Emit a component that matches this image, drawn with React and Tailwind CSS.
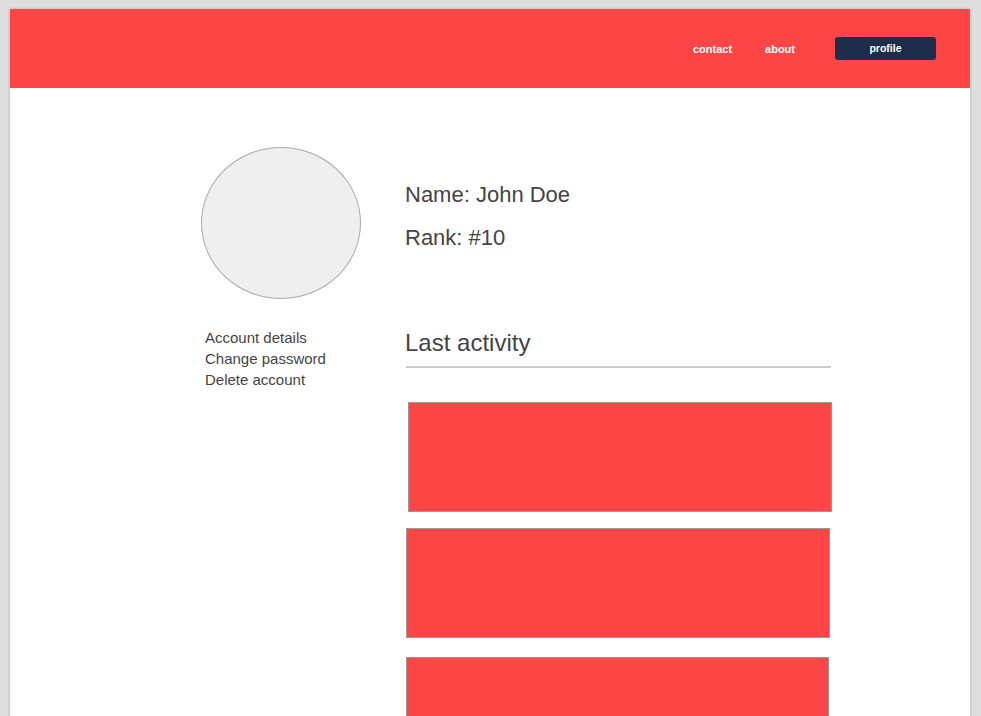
export default function App() {
  return (
    <div className="h-[716px] overflow-hidden bg-[#dedede] pt-[9px] pl-[10px] font-['Liberation_Sans',Arial,sans-serif]">
      <div className="w-[960px] h-[800px] bg-white shadow-[0_0_3px_rgba(0,0,0,0.25)]">
        <header className="h-[79px] bg-[#ff4646] flex items-center justify-end pr-[34px]">
          <nav className="flex items-center text-white text-[11px] font-bold">
            <a className="mr-[33px] mt-[1px]">contact</a>
            <a className="mr-[40px] mt-[1px]">about</a>
            <button className="w-[101px] h-[23px] bg-[#1f2d4d] rounded-[3px] text-[10.5px] font-bold text-white">
              profile
            </button>
          </nav>
        </header>

        <main className="flex pl-[191px] pt-[59px]">
          <aside className="w-[204px] shrink-0">
            <div className="w-[160px] h-[152px] rounded-[50%] bg-[#efefef] border border-[#a9a9a9]"></div>
            <ul className="mt-[28px] pl-[4px] text-[15px] leading-[21px] text-[#444]">
              <li>Account details</li>
              <li>Change password</li>
              <li>Delete account</li>
            </ul>
          </aside>

          <section className="w-[427px]">
            <div className="pt-[35px] text-[22px] text-[#444] leading-[26px]">
              <p>Name: John Doe</p>
              <p className="mt-[17px]">Rank: #10</p>
            </div>
            <h2 className="mt-[78px] text-[24px] text-[#444] leading-[28px]">Last activity</h2>
            <div className="mt-[9px] ml-[1px] w-[425px] h-[2px] bg-[#cccccc]"></div>
            <div className="mt-[34px] flex flex-col">
              <div className="ml-[3px] w-[424px] h-[110px] bg-[#ff4646] border border-[#999]"></div>
              <div className="mt-[16px] ml-[1px] w-[424px] h-[110px] bg-[#ff4646] border border-[#999]"></div>
              <div className="mt-[19px] ml-[1px] w-[423px] h-[110px] bg-[#ff4646] border border-[#999]"></div>
            </div>
          </section>
        </main>
      </div>
    </div>
  );
}
